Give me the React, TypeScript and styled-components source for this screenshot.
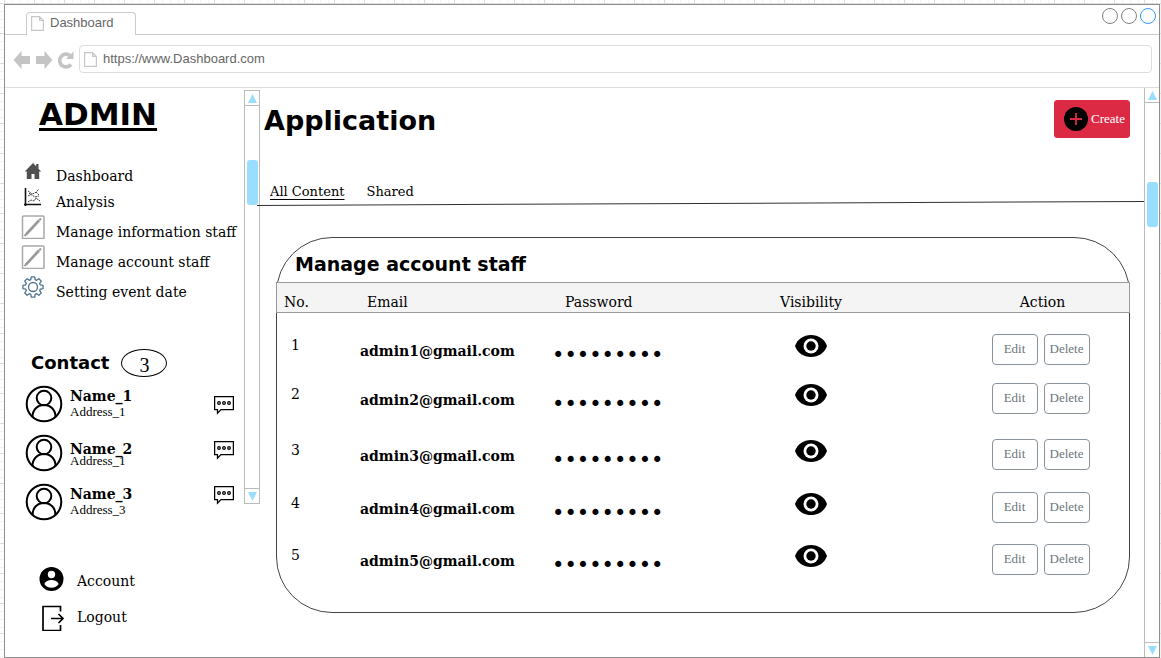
import React from "react";
import styled, { createGlobalStyle, css } from "styled-components";

const SERIF = `Georgia, "DejaVu Serif", serif`;
const SERIF_SMALL = `"Liberation Serif", "Times New Roman", serif`;
const HEADING = `Verdana, "DejaVu Sans", sans-serif`;
const UI = `Arial, "Liberation Sans", sans-serif`;

const GlobalStyle = createGlobalStyle`
  * { box-sizing: border-box; }
  body {
    margin: 0;
    color: #000;
    font-family: ${SERIF};
    background-color: #fff;
    background-image:
      linear-gradient(to right, #dcdcdc 1px, transparent 1px),
      linear-gradient(to bottom, #dcdcdc 1px, transparent 1px),
      repeating-linear-gradient(to right, #f2f2f2 0 1px, transparent 1px 8px),
      repeating-linear-gradient(to bottom, #f2f2f2 0 1px, transparent 1px 8px);
    background-size: 30px 30px;
    background-position: 4px 3px;
  }
  h1, h2, p, ul { margin: 0; padding: 0; }
  ul { list-style: none; }
  a { color: inherit; text-decoration: none; }
  button { font: inherit; cursor: pointer; }
`;

const Backdrop = styled.div`
  min-height: 100vh;
  display: flex;
  padding: 4px 1px 0 4px;
`;

const Window = styled.div`
  flex: 1;
  display: flex;
  flex-direction: column;
  background: #fff;
  border: 1px solid #8f8f8f;
`;

const TabBar = styled.header`
  height: 30px;
  display: flex;
  align-items: flex-end;
`;

const TabLine = styled.span<{ $grow?: boolean }>`
  border-bottom: 1px solid #ccc;
  ${(p) => (p.$grow ? "flex: 1;" : "width: 21px;")}
`;

const BrowserTab = styled.div`
  display: flex;
  align-items: center;
  gap: 6px;
  width: 110px;
  height: 23px;
  padding: 0 0 2px 4px;
  border: 1px solid #ccc;
  border-bottom: 0;
  border-radius: 4px 4px 0 0;
  color: #666;
  font: 13px/20px ${UI};
`;

const WindowButtons = styled.div`
  display: flex;
  gap: 3px;
  align-self: stretch;
  padding: 3px 3px 0 0;
  border-bottom: 1px solid #ccc;
`;

const WindowButton = styled.button<{ $color: string }>`
  width: 16px;
  height: 16px;
  padding: 0;
  border: 1px solid ${(p) => p.$color};
  border-radius: 50%;
  background: #fff;
`;

const Toolbar = styled.div`
  display: flex;
  align-items: center;
  gap: 4px;
  height: 53px;
  padding: 0 7px 4px 8px;
  border-bottom: 1px solid #ddd;
`;

const NavButton = styled.button`
  display: flex;
  align-items: flex-end;
  width: 18px;
  height: 22px;
  padding: 0;
  border: 0;
  background: none;
`;

const AddressBox = styled.label`
  flex: 1;
  display: flex;
  align-items: center;
  gap: 6px;
  height: 28px;
  padding-left: 4px;
  border: 1px solid #ddd;
  border-radius: 4px;
`;

const AddressInput = styled.input`
  flex: 1;
  border: 0;
  outline: 0;
  padding: 0 0 1px;
  color: #666;
  background: none;
  font: 13px/20px ${UI};
`;

const Body = styled.div`
  flex: 1;
  display: flex;
`;

const Sidebar = styled.aside`
  width: 239px;
  padding: 7px 0 0;
`;

const Brand = styled.h1`
  padding-left: 34px;
  font: bold 31px/38px ${HEADING};
  text-decoration: underline;
  text-decoration-thickness: 3px;
  text-underline-offset: 3px;
`;

const Menu = styled.ul`
  padding: 28px 0 0 16px;
`;

const MenuItem = styled.li<{ $height: number }>`
  height: ${(p) => p.$height}px;
`;

const MenuLink = styled.a`
  display: flex;
  gap: 11px;
  white-space: nowrap;
  font-size: 14px;
  line-height: 30px;
`;

const MenuIcon = styled.span`
  display: flex;
  align-items: center;
  justify-content: center;
  width: 24px;
  height: 20px;
`;

const ContactHead = styled.div`
  display: flex;
  align-items: center;
  gap: 12px;
  padding: 42px 0 8px 26px;
`;

const ContactTitle = styled.h2`
  font: bold 18px/28px ${HEADING};
`;

const Count = styled.span`
  width: 46px;
  height: 28px;
  border: 1px solid #000;
  border-radius: 50%;
  text-align: center;
  font: 20px/30px ${SERIF_SMALL};
`;

const Contacts = styled.div`
  display: flex;
  justify-content: space-between;
  padding: 0 10px 0 20px;
`;

const People = styled.ul`
  display: flex;
  flex-direction: column;
  gap: 11px;
`;

const Person = styled.li`
  display: flex;
  align-items: center;
  gap: 7px;
  height: 38px;
`;

const PersonText = styled.div<{ $tight?: boolean }>`
  display: grid;
  grid-auto-rows: ${(p) => (p.$tight ? 11 : 15)}px;
`;

const PersonName = styled.strong`
  font-size: 14px;
  line-height: 15px;
`;

const PersonAddress = styled.span`
  font: 13px/15px ${SERIF_SMALL};
`;

const Chats = styled.div`
  display: flex;
  flex-direction: column;
  gap: 25px;
  padding-top: 10px;
`;

const IconButton = styled.button`
  display: flex;
  padding: 0;
  border: 0;
  background: none;
`;

const Footer = styled.ul`
  display: grid;
  gap: 8px;
  padding: 46px 0 0 34px;
`;

const FooterLink = styled.a`
  display: flex;
  align-items: center;
  gap: 12px;
  font-size: 14px;
  line-height: 28px;
`;

const Track = styled.div<{ $short?: boolean }>`
  display: flex;
  flex-direction: column;
  align-items: center;
  background: #fff;
  border: 1px solid #bbb;
  ${(p) =>
    p.$short
      ? css`
          width: 16px;
          height: 414px;
          margin-top: 2px;
        `
      : css`
          width: 15px;
          border-width: 0 0 0 1px;
        `}
`;

const TrackEnd = styled.button<{ $down?: boolean }>`
  display: flex;
  align-items: center;
  justify-content: center;
  align-self: stretch;
  height: 15px;
  padding: 0;
  border: 0;
  background: none;
  ${(p) => (p.$down ? "border-top: 1px solid #bbb; margin-top: auto;" : "border-bottom: 1px solid #bbb;")}
`;

const Thumb = styled.div<{ $top: number }>`
  width: 11px;
  height: 45px;
  margin-top: ${(p) => p.$top}px;
  border-radius: 3px;
  background: #99ddff;
`;

const Main = styled.main`
  flex: 1;
  min-width: 0;
  padding-bottom: 44px;
`;

const PageHead = styled.div`
  display: flex;
  justify-content: space-between;
  align-items: flex-start;
  padding: 12px 14px 0 4px;
`;

const PageTitle = styled.h1`
  padding-top: 4px;
  font: bold 27px/34px ${HEADING};
`;

const CreateButton = styled.button`
  display: flex;
  align-items: center;
  gap: 3px;
  width: 76px;
  height: 38px;
  padding: 0 0 0 9px;
  border: 1px solid #dc2a45;
  border-radius: 3px;
  background: #dc2a45;
  color: #fff;
  font: 13px/16px ${SERIF_SMALL};
`;

const Tabs = styled.nav`
  display: flex;
  gap: 22px;
  padding: 44px 0 0 10px;
  font-size: 13px;
  line-height: 19px;
`;

const TabLink = styled.a<{ $active?: boolean }>`
  ${(p) => p.$active && "text-decoration: underline; text-underline-offset: 3px;"}
`;

const Slope = styled.svg`
  display: block;
  width: calc(100% + 3px);
  height: 5px;
  margin-left: -3px;
`;

const Panel = styled.section`
  margin: 31px 14px 0 16px;
  height: 376px;
  border: 1px solid #444;
  border-radius: 56px;
`;

const PanelTitle = styled.h2`
  padding: 12px 0 4px 18px;
  font: bold 19px/28px ${HEADING};
`;

const Table = styled.table`
  width: calc(100% + 2px);
  margin-left: -1px;
  table-layout: fixed;
  border-collapse: separate;
  border-spacing: 0;

  tbody::before {
    content: "";
    display: block;
    height: 21px;
  }
`;

const HeadCell = styled.th<{ $width?: number; $indent?: number; $center?: boolean }>`
  ${(p) => p.$width && `width: ${p.$width}px;`}
  height: 31px;
  padding: 8px 0 0 ${(p) => p.$indent ?? 0}px;
  border: solid #999;
  border-width: 1px 0;
  background: #f5f4f5;
  text-align: ${(p) => (p.$center ? "center" : "left")};
  font-weight: normal;
  font-size: 14px;
  line-height: 20px;

  &:first-child { border-left-width: 1px; }
  &:last-child { border-right-width: 1px; }
`;

const Row = styled.tr<{ $height: number }>`
  height: ${(p) => p.$height}px;
`;

const Cell = styled.td<{ $indent?: number; $top?: number; $center?: boolean }>`
  padding: ${(p) => p.$top ?? 0}px 0 0 ${(p) => p.$indent ?? 0}px;
  vertical-align: top;
  text-align: ${(p) => (p.$center ? "center" : "left")};
  font-size: 14px;
  line-height: 20px;
`;

const Email = styled.strong`
  font-size: 14px;
`;

const Mask = styled.span`
  font: 21px/20px "DejaVu Sans", sans-serif;
`;

const EyeButton = styled(IconButton)`
  margin: 0 auto;
`;

const Actions = styled.div`
  display: flex;
  justify-content: center;
  gap: 6px;
`;

const RowButton = styled.button`
  width: 46px;
  height: 31px;
  padding: 0 0 2px;
  border: 1px solid #8a939b;
  border-radius: 4px;
  background: #fff;
  color: #6c757d;
  font: 13px/16px ${SERIF_SMALL};
`;

const PageIcon = ({ width = 13, height = 15 }) => (
  <svg width={width} height={height} viewBox="0 0 13 15" fill="none" stroke="#c8c8c8" strokeWidth="1.2">
    <path d="M.6.6h8l3.8 3.8v10H.6z M8.6.6v3.8h3.8" />
  </svg>
);

const ArrowIcon = ({ right = false }) => (
  <svg width="18" height="20" viewBox="0 0 18 20" fill="#c4c4c4">
    <path d={right ? "M17.5 10 9.5 1v5H1v8h8.500v5z" : "M.5 10l8-9v5H17v8H8.500v5z"} />
  </svg>
);

const ReloadIcon = () => (
  <svg width="18" height="20" viewBox="0 0 18 20">
    <path d="M14 14.500A6.400 6.400 0 1 1 13 5.500" fill="none" stroke="#c4c4c4" strokeWidth="3.600" />
    <path d="M16.500 1.500v7.500H9z" fill="#c4c4c4" />
  </svg>
);

const HomeIcon = () => (
  <svg width="18" height="18" viewBox="0 0 18 18" fill="#505050">
    <path d="M9 1 .8 9.500h2V17H7.500v-5h3v5h4.700V9.500h2L14.500 6.700V2h-2.300v2.300z" />
  </svg>
);

const ChartIcon = () => (
  <svg width="20" height="20" viewBox="0 0 20 20" fill="none" stroke="#111">
    <path d="M2.500 1v18M1 17.500h17" strokeWidth="1.600" />
    <path d="M5 4l4 3 3-1 4-4M5 9l3-1.500 4 2.500 4-1M5 15l3-2 3 1 2-3 4 3M6 6l2 2m5-3 3 3" strokeWidth=".8" strokeDasharray="2 .7" />
  </svg>
);

const EditIcon = () => (
  <svg width="24" height="24" viewBox="0 0 24 24" fill="none" stroke="#999">
    <rect x="1.500" y="1" width="21.500" height="22.500" rx="1" strokeWidth="1.500" stroke="#a8a8a8" />
    <path d="M5 19.500 18 5.500" strokeWidth="2.600" />
    <path d="M18.200 5.300l1.800-1.800M3.500 21l1.500-1.500" strokeWidth="2" />
  </svg>
);

const gearPath = (() => {
  const pts: string[] = [];
  for (let i = 0; i < 8; i++) {
    const a = (i * Math.PI) / 4;
    [[-0.29, 7.6], [-0.17, 10.2], [0.17, 10.2], [0.29, 7.6]].forEach(([d, r]) => {
      pts.push(`${(11 + r * Math.sin(a + d)).toFixed(2)} ${(11 - r * Math.cos(a + d)).toFixed(2)}`);
    });
  }
  return `M${pts.join("L")}Z`;
})();

const GearIcon = () => (
  <svg width="22" height="22" viewBox="0 0 22 22" fill="none" stroke="#4e7490" strokeWidth="1.300" strokeLinejoin="round">
    <path d={gearPath} />
    <circle cx="11" cy="11" r="4.500" />
  </svg>
);

const AvatarIcon = () => (
  <svg width="38" height="38" viewBox="0 0 38 38" fill="none" stroke="#000" strokeWidth="2">
    <circle cx="19" cy="19" r="17.300" />
    <circle cx="19" cy="13" r="7.300" />
    <path d="M7.500 32c0-7.500 5-12 11.500-12s11.500 4.500 11.500 12" />
  </svg>
);

const ChatIcon = () => (
  <svg width="20" height="20" viewBox="0 0 20 20" fill="none" stroke="#000" strokeWidth="1.300">
    <path d="M.6 1.600h18.800v13H7L3.500 18.200v-3.600H.6z" />
    <circle cx="5" cy="8" r="1.300" />
    <circle cx="10" cy="8" r="1.300" />
    <circle cx="15" cy="8" r="1.300" />
  </svg>
);

const AccountIcon = () => (
  <svg width="26" height="28" viewBox="0 0 26 28">
    <circle cx="12.500" cy="12" r="12" fill="#000" />
    <circle cx="12.500" cy="7.500" r="3.700" fill="#fff" />
    <path d="M5.300 17c1-2.600 4-3.900 7.200-3.900s6.200 1.300 7.200 3.900c-1.500 2.400-4 3.800-7.200 3.800s-5.700-1.400-7.200-3.800z" fill="#fff" />
  </svg>
);

const LogoutIcon = () => (
  <svg width="26" height="28" viewBox="0 0 26 28" fill="none" stroke="#000" strokeWidth="1.700">
    <path d="M21.500 8.500V3.500h-17.500v24h17.500V22M12 15.500h12M19.500 11l4.500 4.500-4.500 4.500" />
  </svg>
);

const PlusIcon = () => (
  <svg width="24" height="24" viewBox="0 0 24 24">
    <circle cx="12" cy="12" r="12" fill="#000" />
    <path d="M12 6v12M6 12h12" stroke="#dc2a45" strokeWidth="1.800" />
  </svg>
);

const EyeIcon = () => (
  <svg width="34" height="24" viewBox="0 0 34 24">
    <path d="M1 12C3.500 5 9.500 1 17 1s13.500 4 16 11c-2.500 7-8.500 11-16 11S3.500 19 1 12z" fill="#000" />
    <circle cx="17" cy="12" r="7.500" fill="#fff" />
    <circle cx="17" cy="12" r="4.700" fill="#000" />
  </svg>
);

const Triangle = ({ down = false }) => (
  <svg width="9" height="9" viewBox="0 0 9 9" fill="#99ddff">
    <path d={down ? "M0 0h9L4.500 9z" : "M0 9h9L4.500 0z"} />
  </svg>
);

const Scrollbar = ({ short, top }: { short?: boolean; top: number }) => (
  <Track $short={short}>
    <TrackEnd aria-label="Scroll up"><Triangle /></TrackEnd>
    <Thumb $top={top} />
    <TrackEnd $down aria-label="Scroll down"><Triangle down /></TrackEnd>
  </Track>
);

const menu = [
  { label: "Dashboard", icon: <HomeIcon />, height: 26 },
  { label: "Analysis", icon: <ChartIcon />, height: 30 },
  { label: "Manage information staff", icon: <EditIcon />, height: 30 },
  { label: "Manage account staff", icon: <EditIcon />, height: 30 },
  { label: "Setting event date", icon: <GearIcon />, height: 30 },
];

const people = [
  { name: "Name_1", address: "Address_1" },
  { name: "Name_2", address: "Address_1", tight: true },
  { name: "Name_3", address: "Address_3" },
];

const accounts = [
  { id: 1, email: "admin1@gmail.com", height: 49 },
  { id: 2, email: "admin2@gmail.com", height: 56 },
  { id: 3, email: "admin3@gmail.com", height: 53 },
  { id: 4, email: "admin4@gmail.com", height: 52 },
  { id: 5, email: "admin5@gmail.com", height: 52 },
];

export default function App() {
  return (
    <Backdrop>
      <GlobalStyle />
      <Window>
        <TabBar>
          <TabLine />
          <BrowserTab><PageIcon />Dashboard</BrowserTab>
          <TabLine $grow />
          <WindowButtons>
            <WindowButton $color="#808080" aria-label="Minimize" />
            <WindowButton $color="#808080" aria-label="Maximize" />
            <WindowButton $color="#3399ff" aria-label="Close" />
          </WindowButtons>
        </TabBar>
        <Toolbar>
          <NavButton aria-label="Back"><ArrowIcon /></NavButton>
          <NavButton aria-label="Forward"><ArrowIcon right /></NavButton>
          <NavButton aria-label="Reload"><ReloadIcon /></NavButton>
          <AddressBox>
            <PageIcon />
            <AddressInput aria-label="Address" defaultValue="https://www.Dashboard.com" />
          </AddressBox>
        </Toolbar>
        <Body>
          <Sidebar>
            <Brand>ADMIN</Brand>
            <Menu>
              {menu.map((m) => (
                <MenuItem key={m.label} $height={m.height}>
                  <MenuLink href="#"><MenuIcon>{m.icon}</MenuIcon>{m.label}</MenuLink>
                </MenuItem>
              ))}
            </Menu>
            <ContactHead>
              <ContactTitle>Contact</ContactTitle>
              <Count>3</Count>
            </ContactHead>
            <Contacts>
              <People>
                {people.map((p) => (
                  <Person key={p.name}>
                    <AvatarIcon />
                    <PersonText $tight={p.tight}>
                      <PersonName>{p.name}</PersonName>
                      <PersonAddress>{p.address}</PersonAddress>
                    </PersonText>
                  </Person>
                ))}
              </People>
              <Chats>
                {people.map((p) => (
                  <IconButton key={p.name} aria-label={`Chat with ${p.name}`}><ChatIcon /></IconButton>
                ))}
              </Chats>
            </Contacts>
            <Footer>
              <li><FooterLink href="#"><AccountIcon />Account</FooterLink></li>
              <li><FooterLink href="#"><LogoutIcon />Logout</FooterLink></li>
            </Footer>
          </Sidebar>
          <Scrollbar short top={54} />
          <Main>
            <PageHead>
              <PageTitle>Application</PageTitle>
              <CreateButton><PlusIcon />Create</CreateButton>
            </PageHead>
            <Tabs>
              <TabLink href="#" $active>All Content</TabLink>
              <TabLink href="#">Shared</TabLink>
            </Tabs>
            <Slope viewBox="0 0 886 5" preserveAspectRatio="none">
              <path d="M0 4.500 886 .5" stroke="#333" />
            </Slope>
            <Panel>
              <PanelTitle>Manage account staff</PanelTitle>
              <Table>
                <thead>
                  <tr>
                    <HeadCell $width={84} $indent={7}>No.</HeadCell>
                    <HeadCell $width={192} $indent={7}>Email</HeadCell>
                    <HeadCell $width={160} $indent={13}>Password</HeadCell>
                    <HeadCell $width={198} $center>Visibility</HeadCell>
                    <HeadCell $indent={46} $center>Action</HeadCell>
                  </tr>
                </thead>
                <tbody>
                  {accounts.map((a) => (
                    <Row key={a.id} $height={a.height}>
                      <Cell $indent={15} $top={1}>{a.id}</Cell>
                      <Cell $top={7}><Email>{a.email}</Email></Cell>
                      <Cell $top={11}><Mask>•••••••••</Mask></Cell>
                      <Cell><EyeButton aria-label={`Show password ${a.id}`}><EyeIcon /></EyeButton></Cell>
                      <Cell $indent={41}>
                        <Actions>
                          <RowButton>Edit</RowButton>
                          <RowButton>Delete</RowButton>
                        </Actions>
                      </Cell>
                    </Row>
                  ))}
                </tbody>
              </Table>
            </Panel>
          </Main>
          <Scrollbar top={79} />
        </Body>
      </Window>
    </Backdrop>
  );
}
